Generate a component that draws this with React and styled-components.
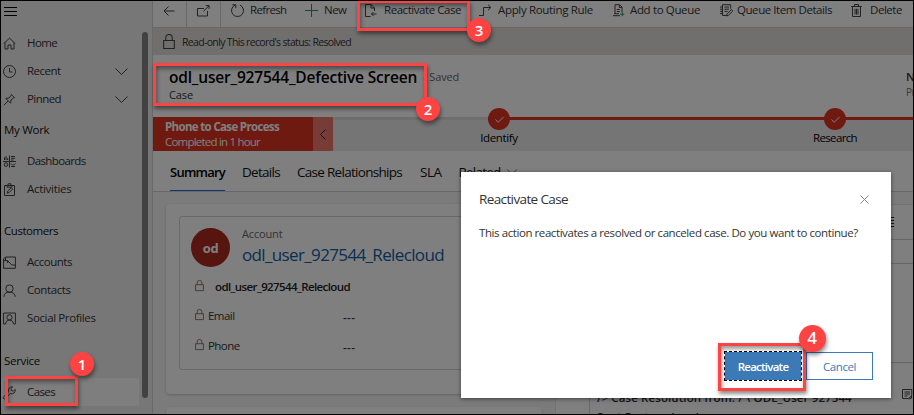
import React from "react";
import styled, { createGlobalStyle } from "styled-components";

const GlobalStyle = createGlobalStyle`
  * { box-sizing: border-box; }
  body { margin: 0; overflow: hidden; font-family: "Open Sans", "Noto Sans", sans-serif; font-size: 11.5px; color: #333; }
`;

/* ---------- text ---------- */
const Text = styled.span`
  flex: none;
  font-size: ${(p) => p.$size || 11.5}px;
  font-weight: ${(p) => p.$weight || 400};
  letter-spacing: ${(p) => p.$track || 0}px;
  line-height: ${(p) => p.$line || 16}px;
  color: ${(p) => p.$color || "#333"};
  white-space: pre;
`;

/* ---------- icons ---------- */
const Svg = styled.svg`
  flex: none;
  display: block;
  fill: none;
  stroke: ${(p) => p.$color || "#444"};
  stroke-width: ${(p) => p.$stroke || 1};
  overflow: visible;
`;

const drawings = {
  menu: <path d="M0 2.5h13M0 6.5h13M0 10.5h13" />,
  home: <path d="M.7 6.6 6.5 1.2l5.800 5.400M2 5.600v6.400h3V8h3v4h3V5.600" />,
  clock: <><circle cx="6.5" cy="6.5" r="6" /><path d="M6.5 3v4h3" /></>,
  pin: <path d="M8 1.200l3.800 3.800M8.600 1.900 6 5 2.800 5.400l4.800 4.800L8 7l3.100-2.600M5 8 .8 12.300" />,
  dashboard: (
    <>
      <path d="M6.5.5v12M0 6.5h13M1.5 5V2.5M3 5V1M4.700 5V3M8 1.500h4M8 3.300h4M8 5h2.500M8 8.500c1 2 3 2 4.500 0M8 11.500h4" />
      <circle cx="3" cy="9.600" r="1.800" />
    </>
  ),
  activity: <path d="M1.500 2.500h10v10h-10zM4 2.500v1.600h5V2.500M5 2.300V.8h3v1.500M4.200 10.200l.6-2.200 3.400-3.300 1.400 1.400L6.200 9.500z" />,
  account: <path d="M.6 12.300V3L2.500 1h9.900v11.300zM.6 4.600h4L8.800 9h3.600M2.500 1v3.500M4.600 4.600V7" />,
  contact: <><circle cx="6.500" cy="4.600" r="3.700" /><path d="M.8 12.800c.2-3 2.200-4.700 5.700-4.700s5.500 1.700 5.700 4.700" /></>,
  profile: <><path d="M2.500 12H.6V1h11.800v11h-1.900" /><circle cx="6.500" cy="5.400" r="2.600" /><path d="M2.600 12c.2-2.600 1.600-3.900 3.900-3.900s3.700 1.300 3.900 3.900" /></>,
  wrench: <path d="M12.200 3.500a3.500 3.500 0 0 1-4.800 4L2.200 12.400a1.100 1.100 0 0 1-1.700-1.600L5.800 5.700A3.500 3.500 0 0 1 9.600.8L8 2.800l.4 1.900 2 .3z" />,
  back: <path d="M11.500 6H1M5.500 1.500 1 6l4.500 4.500" />,
  popout: <path d="M7 3.500H.5v7.500h10V6M6.500 6.200 12 .8M8.800.6h3.300v3.300" />,
  refresh: <path d="M4.200 1A6 6 0 1 0 8.800 1M4.800 4.200V.8H1.400" />,
  plus: <path d="M6.500 0v13M0 6.500h13" />,
  reactivate: <><path d="M5.500 12.500h-5v-12h5.700L9.500 4v3M6 .5V4h3.500" /><path d="M11.500 10H6.500M8.500 8l-2 2 2 2" /></>,
  route: <path d="M0 11.500h4.500v-8h7.300M9 .8l2.800 2.700L9 6.200" />,
  queueAdd: <><path d="M2 9.500V.7h4.500L9 3v5M6.300.7V3.500H9M0 11.700h7M1 9.700h5M3.800 5.500h3M3.800 7.500h3" /><path stroke="#2f9150" d="M9.300 8.200v4M7.300 10.200h4" /></>,
  queueItem: <path d="M6 11.500H2.500V.7h8.200v4M4.500 3h4.500M4.500 5.200h4.500M4.500 7.400h3M0 3h2M0 5.200h2M0 7.400h2M0 9.600h2M6.500 12l.6-2.200 4.300-4.300 1.400 1.500-4.200 4.200z" />,
  trash: <path d="M.2 2.500h10.600M3.500 2.300V.5h4v1.800M1.500 2.700v9.800h8V2.700M4 4.800v5.800M5.500 4.800v5.800M7 4.800v5.800" />,
  lock: <path d="M.5 6h10v7.500H.5zM2.500 6V3.500a3 3 0 0 1 6 0V6" />,
  chevron: <path d="m.5.5 6 6 6-6" />,
  chevronLeft: <path d="m5.500.500-5 5 5 5" />,
  check: <path d="m.5 3.500 2.700 2.800L8.700.800" />,
  close: <path d="m.500.500 8 8M8.500.500l-8 8" />,
  note: <path d="M6 9.500H.5v-9h9.300V6M2.500 3h5.500M2.500 5h5.500M2.500 7h3M9.500 6.500 6.500 10l3-.8z" />,
  lines: <path d="M0 .5h10M0 3.500h10M0 6.500h10M0 9.500h10" />,
};

const Icon = ({ name, w = 13, h = 13, box, ...rest }) => (
  <Svg width={w} height={h} viewBox={`0 0 ${box || `${w} ${h}`}`} {...rest}>
    {drawings[name]}
  </Svg>
);

/* ---------- shell ---------- */
const Screen = styled.div`
  position: relative;
  width: 914px;
  height: 415px;
  border: 1px solid #000;
  background: #fff;
  display: flex;
  overflow: hidden;
`;

const Sidebar = styled.nav`
  flex: none;
  width: 152px;
  height: 413px;
  background: #efefef;
  border-right: 1px solid #d2d2d2;
  display: grid;
  grid-template-columns: 138px 1fr;
`;

const NavList = styled.div`
  display: flex;
  flex-direction: column;
`;

const MenuButton = styled.div`
  height: 28px;
  padding: 4px 0 0 3px;
`;

const NavRow = styled.div`
  height: 28px;
  padding: 0 11px 0 2px;
  display: grid;
  grid-template-columns: 24px 1fr auto;
  align-items: center;
  background: ${(p) => (p.$active ? "#fcfcfc" : "transparent")};
`;

const NavHeading = styled.div`
  height: ${(p) => 34 + p.$gap}px;
  padding: ${(p) => p.$gap}px 0 0 3px;
  display: flex;
  align-items: center;
`;

const ScrollThumb = styled.div`
  width: 6px;
  height: 366px;
  margin: 31px 0 0 3px;
  border-radius: 3px;
  background: #858585;
`;

const Main = styled.main`
  flex: none;
  width: 760px;
  height: 413px;
  display: flex;
  flex-direction: column;
  overflow: hidden;
`;

/* ---------- command bar ---------- */
const CommandBar = styled.div`
  flex: none;
  height: 26px;
  display: flex;
`;

const CommandCell = styled.div`
  flex: none;
  width: 34px;
  border-right: 1px solid #d0d0d0;
  padding: 4px 0 0 10px;
`;

const Command = styled.div`
  flex: none;
  width: ${(p) => p.$w}px;
  height: 18px;
  display: grid;
  grid-template-columns: ${(p) => p.$gap || 19}px 1fr;
  align-items: center;
  margin-left: ${(p) => p.$lead || 0}px;
`;

const Notice = styled.div`
  flex: none;
  height: 28px;
  display: flex;
  align-items: center;
  gap: 7px;
  padding-left: 10px;
  background: #e1dfdd;
  border-top: 1px solid #d3d1cf;
`;

/* ---------- record header ---------- */
const RecordHeader = styled.header`
  flex: none;
  height: 62px;
  padding: 13px 0 0 16px;
  display: grid;
  grid-template-columns: 737px 1fr;
`;

const HeaderStack = styled.div`
  display: flex;
  flex-direction: column;
  gap: ${(p) => p.$gap || 0}px;
`;

const TitleLine = styled.div`
  display: flex;
  align-items: center;
  gap: 6px;
  height: 18px;
`;

/* ---------- process bar ---------- */
const ProcessBar = styled.div`
  flex: none;
  height: 34px;
  display: flex;
  background: #ebebeb;
`;

const ProcessName = styled.div`
  flex: none;
  width: 160px;
  padding: 2px 0 0 12px;
  display: flex;
  flex-direction: column;
  background: #dd3522;
`;

const ProcessCollapse = styled.div`
  flex: none;
  width: 20px;
  display: grid;
  place-items: center;
  background: #ee786c;
`;

const StageTrack = styled.div`
  flex: 1;
  min-width: 0;
  display: flex;
  border-top: 3px solid #dcdcdc;
`;

const Stage = styled.div`
  flex: none;
  width: ${(p) => p.$w}px;
  margin-top: -3px;
  display: flex;
  flex-direction: column;
  align-items: center;
  background: linear-gradient(#dd3522, #dd3522) right top / ${(p) => p.$line}px 3px no-repeat;
`;

const StageDot = styled.div`
  width: 22px;
  height: 22px;
  margin-top: -9px;
  border-radius: 50%;
  display: grid;
  place-items: center;
  background: #dd3522;
`;

/* ---------- tabs ---------- */
const Tabs = styled.div`
  flex: none;
  height: 41px;
  padding-left: 17px;
  display: flex;
  border-bottom: 1px solid #d0d0d0;
`;

const Tab = styled.div`
  flex: none;
  height: 40px;
  padding-top: 13px;
  margin-right: ${(p) => p.$after || 0}px;
  border-bottom: 1px solid ${(p) => (p.$active ? "#2266e3" : "transparent")};
  display: flex;
  gap: 6px;
`;

/* ---------- form ---------- */
const FormArea = styled.section`
  flex: 1;
  display: grid;
  grid-template-columns: 376px 1fr;
  gap: 13px;
  padding: 12px 0 0 13px;
  background: #f7f7f7;
  overflow: hidden;
`;

const Column = styled.div`
  display: flex;
  flex-direction: column;
  gap: 13px;
`;

const Card = styled.div`
  flex: none;
  height: ${(p) => p.$h}px;
  padding: 12px 13px;
  border-radius: 4px;
  background: #fff;
  box-shadow: 0 1px 3px rgba(0, 0, 0, 0.2);
`;

const AccountBox = styled.div`
  height: 154px;
  border: 1px solid #d3d3d3;
  border-radius: 3px;
  padding: 11px 0 0 11px;
`;

const AccountHead = styled.div`
  display: flex;
  gap: 12px;
  height: 44px;
`;

const Avatar = styled.div`
  flex: none;
  width: 39px;
  height: 39px;
  border-radius: 50%;
  display: grid;
  place-items: center;
  background: #ac2b1e;
`;

const AccountName = styled.div`
  display: flex;
  flex-direction: column;
  margin-top: -2px;
`;

const FieldRow = styled.div`
  height: ${(p) => p.$h || 30}px;
  padding-left: 4px;
  display: grid;
  grid-template-columns: ${(p) => p.$label || 13}px ${(p) => 148 - (p.$label || 13)}px 1fr;
  align-items: center;
`;

const LockSlot = styled.span`
  padding-bottom: 3px;
`;

const EmptyValue = styled.span`
  padding-top: 4px;
`;

const TimelineCard = styled.div`
  height: 230px;
  background: #fff;
  border: 1px solid #e6e6e6;
  border-right: 0;
  display: grid;
  grid-template-rows: 35px 24px 99px 1fr;
`;

const TimelineBand = styled.div`
  border-bottom: 1px solid #cdcdcd;
  display: flex;
  justify-content: flex-end;
  align-items: center;
  padding-right: 19px;
`;

const TimelineEntry = styled.div`
  margin-left: 33px;
  border-left: 1px solid #d3d3d3;
  padding: 26px 1px 0 7px;
  display: flex;
  justify-content: space-between;
`;

/* ---------- dialog ---------- */
const Backdrop = styled.div`
  position: absolute;
  inset: 0;
  background: rgba(0, 0, 0, 0.5);
`;

const Dialog = styled.div`
  position: absolute;
  left: 460px;
  top: 171px;
  width: 430px;
  height: 226px;
  padding: 18px 18px 0 18px;
  display: flex;
  flex-direction: column;
  background: #fff;
  box-shadow: 0 1px 4px rgba(0, 0, 0, 0.5);
`;

const DialogTitle = styled.div`
  height: 18px;
  padding-right: 4px;
  display: flex;
  align-items: center;
  justify-content: space-between;
`;

const DialogBody = styled.div`
  flex: 1;
  padding-top: 17px;
`;

const DialogActions = styled.div`
  height: 46px;
  display: flex;
  justify-content: flex-end;
  align-items: flex-start;
  gap: 5px;
`;

const Button = styled.button`
  width: ${(p) => (p.$primary ? 76 : 67)}px;
  height: 28px;
  padding: 0;
  font-family: inherit;
  border: 1px solid #3b79b7;
  background: ${(p) => (p.$primary ? "#3b79b7" : "#fff")};
  outline: ${(p) => (p.$primary ? "1px dashed #000" : "none")};
`;

/* ---------- callouts ---------- */
const Frame = styled.div`
  position: absolute;
  left: ${(p) => p.$x - 1}px;
  top: ${(p) => p.$y - 1}px;
  width: ${(p) => p.$w}px;
  height: ${(p) => p.$h}px;
  border: 3px solid #ff4343;
  box-shadow: 1px 3px 4px rgba(0, 0, 0, 0.45), inset 1px 3px 4px rgba(0, 0, 0, 0.4);
`;

const Badge = styled.div`
  position: absolute;
  left: ${(p) => p.$x - p.$r - 1}px;
  top: ${(p) => p.$y - p.$r - 1}px;
  width: ${(p) => p.$r * 2}px;
  height: ${(p) => p.$r * 2}px;
  border-radius: 50%;
  display: grid;
  place-items: center;
  background: #ff4343;
  box-shadow: 1px 3px 4px rgba(0, 0, 0, 0.45);
`;

const navigation = [
  { rows: [["home", "Home", -0.6], ["clock", "Recent", -0.53, true], ["pin", "Pinned", -0.57, true]] },
  { heading: "My Work", track: -0.3, gap: 0, rows: [["dashboard", "Dashboards", -0.63], ["activity", "Activities", -0.29]] },
  { heading: "Customers", track: -0.45, gap: 11, rows: [["account", "Accounts", -0.49], ["contact", "Contacts", -0.41], ["profile", "Social Profiles", -0.37]] },
  { heading: "Service", track: -0.3, gap: 12, rows: [["wrench", "Cases", -0.61]] },
];

const commands = [
  { icon: "refresh", label: "Refresh", track: -0.66, w: 74, lead: 10 },
  { icon: "plus", label: "New", track: -0.51, w: 60, color: "#2f9150" },
  { icon: "reactivate", label: "Reactivate Case", track: -0.45, w: 114 },
  { icon: "route", label: "Apply Routing Rule", track: -0.33, w: 134 },
  { icon: "queueAdd", label: "Add to Queue", track: -0.36, w: 107, gap: 17 },
  { icon: "queueItem", label: "Queue Item Details", track: -0.44, w: 131, gap: 17 },
  { icon: "trash", label: "Delete", track: -0.45, w: 60 },
];

const FieldLock = () => (
  <LockSlot><Icon name="lock" w={9} h={11} box="11 14" $color="#6b5a50" /></LockSlot>
);

const Field = ({ label }) => (
  <FieldRow>
    <FieldLock />
    <Text $track={-0.55}>{label}</Text>
    <EmptyValue><Text $weight={600} $track={0.4}>---</Text></EmptyValue>
  </FieldRow>
);

export default function App() {
  return (
    <>
      <GlobalStyle />
      <Screen>
        <Sidebar>
          <NavList>
            <MenuButton><Icon name="menu" $color="#000" /></MenuButton>
            {navigation.map((group, i) => (
              <React.Fragment key={i}>
                {group.heading && (
                  <NavHeading $gap={group.gap}>
                    <Text $weight={500} $track={group.track} $color="#111">{group.heading}</Text>
                  </NavHeading>
                )}
                {group.rows.map(([icon, label, track, expandable]) => (
                  <NavRow key={label} $active={label === "Cases"}>
                    <Icon name={icon} />
                    <Text $track={track}>{label}</Text>
                    {expandable && <Icon name="chevron" w={13} h={7} />}
                  </NavRow>
                ))}
              </React.Fragment>
            ))}
          </NavList>
          <ScrollThumb />
        </Sidebar>

        <Main>
          <CommandBar>
            <CommandCell><Icon name="back" h={12} /></CommandCell>
            <CommandCell><Icon name="popout" /></CommandCell>
            {commands.map((c) => (
              <Command key={c.label} $w={c.w} $gap={c.gap} $lead={c.lead}>
                <Icon name={c.icon} $color={c.color} />
                <Text $track={c.track}>{c.label}</Text>
              </Command>
            ))}
          </CommandBar>

          <Notice>
            <Icon name="lock" w={12} h={15} box="11 14" />
            <Text $size={10.5} $track={-0.66}>Read-only This record's status: Resolved</Text>
          </Notice>

          <RecordHeader>
            <HeaderStack>
              <TitleLine>
                <Text $size={15.5} $weight={600} $track={-0.19} $line={18} $color="#000">odl_user_927544_Defective Screen</Text>
                <Text $size={11} $track={-0.13} $color="#666">- Saved</Text>
              </TitleLine>
              <Text $size={11} $track={-0.11} $line={18}>Case</Text>
            </HeaderStack>
            <HeaderStack>
              <Text $weight={600} $line={18}>New</Text>
              <Text $size={10} $track={-0.4} $line={12} $color="#777">Priority</Text>
            </HeaderStack>
          </RecordHeader>

          <ProcessBar>
            <ProcessName>
              <Text $weight={700} $track={-0.66} $line={15} $color="#fff">Phone to Case Process</Text>
              <Text $track={-0.79} $line={15} $color="#fff">Completed in 1 hour</Text>
            </ProcessName>
            <ProcessCollapse><Icon name="chevronLeft" w={6} h={11} $color="#222" /></ProcessCollapse>
            <StageTrack>
              <Stage $w={332} $line={166}>
                <StageDot><Icon name="check" w={9} h={7} $color="#fff" /></StageDot>
                <Text $track={-0.36} $color="#000">Identify</Text>
              </Stage>
              <Stage $w={340} $line={340}>
                <StageDot><Icon name="check" w={9} h={7} $color="#fff" /></StageDot>
                <Text $track={-0.64} $color="#000">Research</Text>
              </Stage>
            </StageTrack>
          </ProcessBar>

          <Tabs>
            <Tab $active $after={17}><Text $size={13} $weight={600} $track={-0.76} $color="#000">Summary</Text></Tab>
            <Tab $after={17}><Text $size={13.5} $track={-0.71} $color="#111">Details</Text></Tab>
            <Tab $after={18}><Text $size={13.5} $track={-0.71} $color="#111">Case Relationships</Text></Tab>
            <Tab $after={17}><Text $size={13.5} $track={-0.5} $color="#111">SLA</Text></Tab>
            <Tab><Text $size={13.5} $track={-0.78} $color="#111">Related</Text><Icon name="chevron" w={10} h={16} box="13 7" /></Tab>
          </Tabs>

          <FormArea>
            <Column>
              <Card $h={190}>
                <AccountBox>
                  <AccountHead>
                    <Avatar><Text $size={13} $weight={700} $track={-0.5} $color="#fff">od</Text></Avatar>
                    <AccountName>
                      <Text $size={11} $track={-0.15} $color="#666">Account</Text>
                      <Text $size={17} $track={-0.64} $line={26} $color="#115ea3">odl_user_927544_Relecloud</Text>
                    </AccountName>
                  </AccountHead>
                  <FieldRow $h={29} $label={20}>
                    <FieldLock />
                    <Text $weight={600} $track={-0.61} $color="#222">odl_user_927544_Relecloud</Text>
                  </FieldRow>
                  <Field label="Email" />
                  <Field label="Phone" />
                </AccountBox>
              </Card>
              <Card $h={60} />
            </Column>
            <TimelineCard>
              <TimelineBand><Icon name="lines" w={10} h={10} $color="#224" /></TimelineBand>
              <TimelineBand />
              <TimelineBand />
              <TimelineEntry>
                <HeaderStack $gap={1}>
                  <Text $weight={600} $track={0.1} $line={18}>{"/> Case Resolution from: / \\ ODL_User 927544"}</Text>
                  <Text $weight={600} $line={18}>Sent Restored and</Text>
                </HeaderStack>
                <Icon name="note" w={10} h={10} />
              </TimelineEntry>
            </TimelineCard>
          </FormArea>
        </Main>

        <Backdrop />

        <Dialog>
          <DialogTitle>
            <Text $size={13.5} $track={-0.62}>Reactivate Case</Text>
            <Icon name="close" w={9} h={9} $color="#888" />
          </DialogTitle>
          <DialogBody>
            <Text $track={-0.42}>This action reactivates a resolved or canceled case. Do you want to continue?</Text>
          </DialogBody>
          <DialogActions>
            <Button $primary><Text $weight={600} $track={-0.76} $color="#fff">Reactivate</Text></Button>
            <Button><Text $track={-0.43} $color="#3b79b7">Cancel</Text></Button>
          </DialogActions>
        </Dialog>

        <Frame $x={5} $y={376} $w={73} $h={30} />
        <Frame $x={153} $y={63} $w={274} $h={43} />
        <Frame $x={357} $y={0} $w={113} $h={31} />
        <Frame $x={718} $y={343} $w={88} $h={48} />
        <Badge $x={82} $y={364} $r={12}><Text $size={15} $weight={600} $color="#fff">1</Text></Badge>
        <Badge $x={428} $y={109} $r={12}><Text $size={15} $weight={600} $color="#fff">2</Text></Badge>
        <Badge $x={479} $y={30} $r={12}><Text $size={15} $weight={600} $color="#fff">3</Text></Badge>
        <Badge $x={812} $y={338} $r={13.5}><Text $size={17} $weight={600} $color="#fff">4</Text></Badge>
      </Screen>
    </>
  );
}
